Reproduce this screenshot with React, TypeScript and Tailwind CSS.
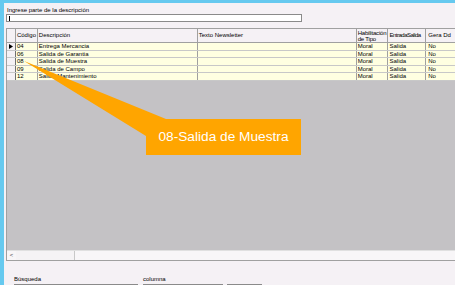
import React from "react";

const rows = [
  { c: "04", d: "Entrega Mercancia", sel: true },
  { c: "06", d: "Salida de Garantia" },
  { c: "08", d: "Salida de Muestra" },
  { c: "09", d: "Salida de Campo" },
  { c: "12", d: "Salida Mantenimiento" },
];

export default function App() {
  return (
    <div
      className="relative w-[455px] h-[285px] overflow-hidden bg-[#f5f1f5] text-black"
      style={{ fontFamily: '"Liberation Sans", Arial, sans-serif' }}
    >
      <div className="flex h-full">
        <div className="w-[4px] h-full bg-[#66c9ef] shrink-0" />
        <div className="flex-1 flex flex-col">
          <div className="h-[3px] shrink-0 bg-[#66c9ef]" />
          <div className="shrink-0 pl-[3px] pt-[3px] text-[6px] leading-[8px] h-[11px]">Ingrese parte de la descripción</div>
          <div className="shrink-0 ml-[2px] w-[296px] h-[8px] bg-white border border-[#8a8a8a] flex items-center pl-[2px]">
            <div className="w-px h-[5px] bg-black" />
          </div>
          <div className="shrink-0 h-[6px]" />
          {/* grid */}
          <div className="shrink-0 ml-[2px] w-[460px] h-[233px] border-t border-b border-l border-[#a0a0a0] flex flex-col text-[6px] leading-[7px]">
            <div className="shrink-0 flex h-[14px] border-b border-[#a0a0a0] bg-[#f5f1f5]">
              <div className="w-[9px] border-r border-[#a0a0a0]" />
              <div className="w-[22px] border-r border-[#a0a0a0] flex items-center pl-[1px]">Código</div>
              <div className="w-[161px] border-r border-[#a0a0a0] flex items-center pl-[1px]">Descripción</div>
              <div className="w-[160px] border-r border-[#a0a0a0] flex items-center pl-[1px]">Texto Newsletter</div>
              <div className="w-[32px] border-r border-[#a0a0a0] flex items-center pl-[1px] leading-[6px] tracking-[-0.2px]">Habilitación<br />de Tipo</div>
              <div className="w-[38px] border-r border-[#a0a0a0] flex items-center pl-[1px] tracking-[-0.5px] whitespace-nowrap">EntradaSalida</div>
              <div className="w-[40px] flex items-center pl-[2px] whitespace-nowrap">Gera Dd</div>
            </div>
            {rows.map((r) => (
              <div key={r.c} className="shrink-0 flex h-[7.6px] bg-[#ffffe1] border-b border-[#c8c8c8] leading-[6px]">
                <div className="w-[9px] bg-[#f5f1f5] border-r border-[#707070] flex items-center justify-center">
                  {r.sel && (
                    <svg width="4" height="5" viewBox="0 0 4 5">
                      <polygon points="0,0 4,2.5 0,5" fill="black" />
                    </svg>
                  )}
                </div>
                <div className="w-[22px] border-r border-[#a0a0a0] pl-[1px]">{r.c}</div>
                <div className="w-[161px] border-r border-[#a0a0a0] pl-[1px] whitespace-nowrap">{r.d}</div>
                <div className="w-[160px] border-r border-[#a0a0a0]" />
                <div className="w-[32px] border-r border-[#a0a0a0] pl-[1px]">Moral</div>
                <div className="w-[38px] border-r border-[#a0a0a0] pl-[1px]">Salida</div>
                <div className="w-[40px] pl-[2px]">No</div>
              </div>
            ))}
            <div className="flex-1 bg-[#c4c2c5]" />
            <div className="shrink-0 h-[10px] flex bg-[#f8f6f8] border-t border-[#e0e0e0]">
              <div className="w-[9px] flex items-center justify-center text-[6px] text-[#444]">&lt;</div>
              <div className="w-[59px] border-r border-[#c8c8c8] bg-[#f5f3f5]" />
            </div>
          </div>
          <div className="shrink-0 h-[15px]" />
          <div className="shrink-0 flex text-[6px] leading-[7px]">
            <div className="ml-[10px] w-[129px] flex flex-col">
              <div>Búsqueda</div>
              <div className="mt-[1px] w-[124px] h-[8px] bg-white border border-[#8a8a8a]" />
            </div>
            <div className="w-[84px] flex flex-col">
              <div>columna</div>
              <div className="mt-[1px] w-[80px] h-[8px] bg-white border border-[#8a8a8a]" />
            </div>
            <div className="pt-[8px]">
              <div className="w-[35px] h-[8px] bg-[#f0f0f0] border border-[#8a8a8a]" />
            </div>
          </div>
        </div>
      </div>

      {/* callout */}
      <svg className="absolute left-0 top-0 pointer-events-none" width="455" height="285">
        <polygon points="24,61 166,119 146,119 146,136" fill="#ffa500" />
      </svg>
      <div
        className="absolute left-[146px] top-[119px] w-[155px] h-[36px] bg-[#ffa500] text-white flex items-center justify-center text-[13.7px]"
        style={{ fontFamily: '"Liberation Sans", Arial, sans-serif' }}
      >
        08-Salida de Muestra
      </div>
    </div>
  );
}
